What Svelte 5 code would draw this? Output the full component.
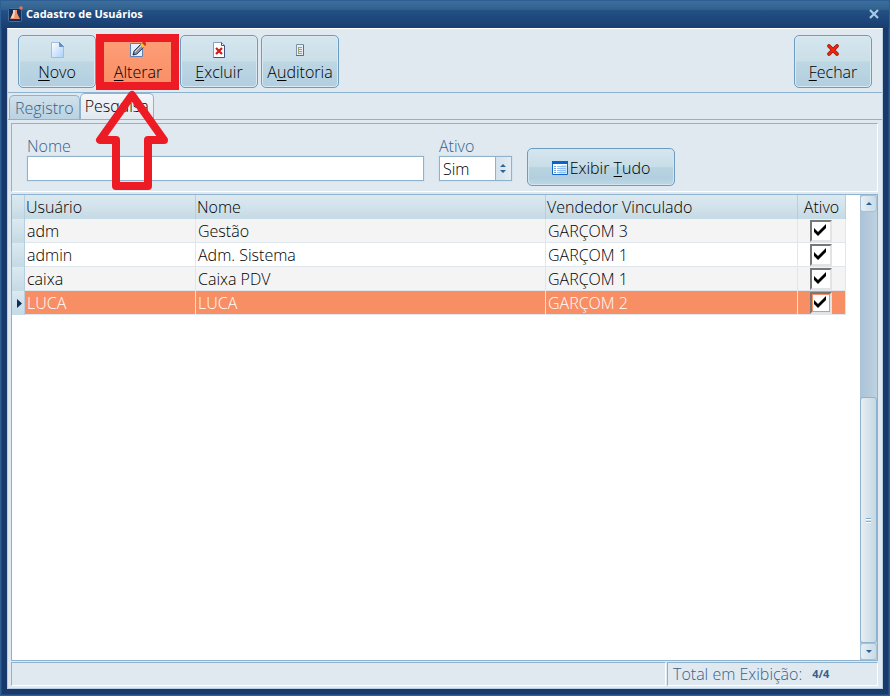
<script>
  let tab = $state("pesquisa");
  let nome = $state("");
  let ativo = $state("Sim");
  let selected = $state(3);

  let users = $state([
    { usuario: "adm", nome: "Gestão", vendedor: "GARÇOM 3", ativo: true },
    { usuario: "admin", nome: "Adm. Sistema", vendedor: "GARÇOM 1", ativo: true },
    { usuario: "caixa", nome: "Caixa PDV", vendedor: "GARÇOM 1", ativo: true },
    { usuario: "LUCA", nome: "LUCA", vendedor: "GARÇOM 2", ativo: true },
  ]);

  let total = $derived(users.length);
</script>

<div class="window">
  <header class="titlebar">
    <svg class="app-icon" width="16" height="16" viewBox="0 0 16 16">
      <rect x="1.500" y="2.500" width="13" height="13" rx="1" fill="#14305a" stroke="#3f6f9c" />
      <path d="M6 4h4v3l3 6H3l3-6z" fill="#f08f68" />
      <path d="M6 4h2v3l-1 5H4l2-5z" fill="#fbd0b8" />
      <circle cx="14" cy="2" r="1.800" fill="#e8764a" />
    </svg>
    <h1>Cadastro de Usuários</h1>
    <button class="close" aria-label="Fechar janela">
      <svg width="12" height="12" viewBox="0 0 12 12">
        <path d="M2 2l8 8M10 2l-8 8" stroke="#a9cbe6" stroke-width="2.200" />
      </svg>
    </button>
  </header>

  <main class="client">
    <div class="toolbar">
      <button class="tool">
        <svg width="16" height="16" viewBox="0 0 16 16">
          <defs>
            <linearGradient id="sheet" x1="0" y1="0" x2="1" y2="1">
              <stop offset="0" stop-color="#fff" />
              <stop offset="1" stop-color="#a9d0fa" />
            </linearGradient>
          </defs>
          <path d="M2.500.5h8l4 4v11h-12z" fill="url(#sheet)" stroke="#a3bbe0" />
          <path d="M10.500.5v4h4z" fill="#5f8fcb" stroke="#6c8fc4" />
        </svg>
        <span><u>N</u>ovo</span>
      </button>
      <button class="tool hot">
        <svg width="18" height="16" viewBox="0 0 18 16">
          <path d="M1.500 1.500h12v13h-12z" fill="#e4f0ff" stroke="#5d82b8" />
          <path d="M4 13l1-4 7-7 3 3-7 7z" fill="#8790a8" stroke="#393f58" />
          <path d="M6 10l7-7" stroke="#d8dce8" />
          <path d="M11 3l2-2 3 3-2 2z" fill="#f4c33f" />
          <path d="M13 1l1-1h2l1 1v2l-1 1z" fill="#dc2b20" />
          <path d="M4 13l.5-2 1.500 1.500z" fill="#222" />
        </svg>
        <span><u>A</u>lterar</span>
      </button>
      <button class="tool">
        <svg width="16" height="16" viewBox="0 0 16 16">
          <path d="M2.500.5h8l3 3v12h-11z" fill="#fff" stroke="#8b9bc0" />
          <path d="M10.500.5v3h3v12h-11" fill="none" stroke="#3f5480" />
          <path d="M5 6l6 6M11 6l-6 6" stroke="#cc1e14" stroke-width="2.200" />
        </svg>
        <span><u>E</u>xcluir</span>
      </button>
      <button class="tool">
        <svg width="16" height="16" viewBox="0 0 16 16">
          <path d="M4.500 2.500h7v11h-7z" fill="#e9edf0" stroke="#7796aa" />
          <path d="M11.500 3v10.500H4" fill="none" stroke="#59727f" />
          <path d="M6 5.500h4M6 7.500h4M6 9.500h4M6 11.500h4" stroke="#a49f78" />
          <path d="M6.500 5v7" stroke="#a49f78" />
        </svg>
        <span>A<u>u</u>ditoria</span>
      </button>
      <button class="tool last">
        <svg width="16" height="16" viewBox="0 0 16 16">
          <path d="M4 4l8 8M12 4l-8 8" stroke="#a51208" stroke-width="3.800" stroke-linecap="round" />
          <path d="M4 4l8 8M12 4l-8 8" stroke="#f02509" stroke-width="2.200" stroke-linecap="round" />
        </svg>
        <span><u>F</u>echar</span>
      </button>
      <div class="highlight"></div>
      <svg class="arrow" width="74" height="102" viewBox="0 0 74 102">
        <path
          d="M37 5L5 50h16v46h32V50h16z"
          fill="none"
          stroke="#ed1c24"
          stroke-width="8"
          stroke-linejoin="round"
        />
      </svg>
    </div>

    <div class="tabs" role="tablist">
      <button
        role="tab"
        class="tab"
        class:active={tab === "registro"}
        aria-selected={tab === "registro"}
        onclick={() => (tab = "registro")}>Registro</button
      >
      <button
        role="tab"
        class="tab"
        class:active={tab === "pesquisa"}
        aria-selected={tab === "pesquisa"}
        onclick={() => (tab = "pesquisa")}>Pesquisa</button
      >
    </div>

    <section class="page">
      <form class="filters" onsubmit={(e) => e.preventDefault()}>
        <div class="field name-field">
          <label for="nome">Nome</label>
          <input id="nome" type="text" bind:value={nome} />
        </div>
        <div class="field">
          <label for="ativo">Ativo</label>
          <select id="ativo" bind:value={ativo}>
            <option>Sim</option>
            <option>Não</option>
          </select>
        </div>
        <button class="show-all">
          <svg width="16" height="14" viewBox="0 0 16 14">
            <path d="M.5.5h15v13H.5z" fill="#fff" stroke="#1267ca" />
            <path d="M0 0h16v3H0z" fill="#0c62cc" />
            <path d="M9 4h6v9H7z" fill="#cfe6ff" />
            <path d="M2 5.500h2M2 7.500h2M2 9.500h2M2 11.500h2" stroke="#6ea5e3" />
            <path d="M5 5.500h9M5 7.500h9M5 9.500h9M5 11.500h9" stroke="#8fbff5" />
          </svg>
          <span>Exibir <u>T</u>udo</span>
        </button>
      </form>

      <div class="grid">
        <div class="rows">
          <table>
            <colgroup>
              <col class="c-mark" />
              <col class="c-user" />
              <col />
              <col class="c-seller" />
              <col class="c-active" />
            </colgroup>
            <thead>
              <tr>
                <th class="mark"></th>
                <th>Usuário</th>
                <th>Nome</th>
                <th>Vendedor Vinculado</th>
                <th class="center">Ativo</th>
              </tr>
            </thead>
            <tbody>
              {#each users as user, i}
                <tr class:selected={i === selected} onclick={() => (selected = i)}>
                  <td class="mark">
                    {#if i === selected}
                      <svg width="5" height="9" viewBox="0 0 5 9">
                        <path d="M0 0l5 4.500L0 9z" fill="#0d2b5c" />
                      </svg>
                    {/if}
                  </td>
                  <td>{user.usuario}</td>
                  <td>{user.nome}</td>
                  <td>{user.vendedor}</td>
                  <td class="check">
                    <input
                      type="checkbox"
                      aria-label="Ativo: {user.usuario}"
                      bind:checked={user.ativo}
                    />
                  </td>
                </tr>
              {/each}
            </tbody>
          </table>
        </div>
        <div class="scrollbar">
          <button class="step" aria-label="Rolar para cima">
            <svg width="6" height="3" viewBox="0 0 6 3"><path d="M0 3l3-3 3 3z" fill="#2c5f94" /></svg>
          </button>
          <div class="track">
            <div class="thumb"><i></i><i></i></div>
          </div>
          <button class="step" aria-label="Rolar para baixo">
            <svg width="6" height="3" viewBox="0 0 6 3"><path d="M0 0l3 3 3-3z" fill="#2c5f94" /></svg>
          </button>
        </div>
      </div>

      <footer class="status">
        <div class="cell grow"></div>
        <div class="cell total">
          <span>Total em Exibição:</span>
          <b>{total}/{total}</b>
        </div>
      </footer>
    </section>
  </main>
</div>

<style>
  :global(body) {
    background: #18396a;
  }

  .window,
  .window * {
    box-sizing: border-box;
  }

  .window {
    --line: #8fb3ce;
    --edge: #6c9dc1;
    --face: #e1e9f0;
    --ink: #35618c;
    display: flex;
    flex-direction: column;
    min-height: 100vh;
    padding: 0 6px 6px;
    background: #18396a;
    border: 1px solid #2d5f94;
    box-shadow: inset 0 0 0 1px #1f4a80;
    font-family: "Open Sans", "Noto Sans", sans-serif;
    font-size: 16px;
    font-weight: 300;
    line-height: 20px;
    color: #000;
  }

  button,
  input,
  select {
    font: inherit;
    color: inherit;
    margin: 0;
    padding: 0;
  }

  u {
    text-underline-offset: 2px;
    text-decoration-thickness: 1px;
  }

  .titlebar {
    display: flex;
    align-items: center;
    gap: 3px;
    height: 27px;
    margin: 0 -6px;
    padding: 0 9px 2px 6px;
    background: linear-gradient(#3c6d9c, #32638f 30%, #235084 36%, #193d70);
  }

  .titlebar h1 {
    flex: 1;
    margin: 0;
    font-size: 11px;
    font-weight: 700;
    color: #fff;
  }

  .close {
    display: flex;
    background: none;
    border: none;
  }

  .client {
    flex: 1;
    display: flex;
    flex-direction: column;
    background: var(--face);
    border: 1px solid #b7cfe2;
    border-top-color: #fff;
  }

  .toolbar {
    position: relative;
    display: flex;
    gap: 3px;
    padding: 6px 10px 4px;
    border-bottom: 1px solid var(--line);
  }

  .tool {
    display: flex;
    flex-direction: column;
    align-items: center;
    gap: 4px;
    width: 78px;
    height: 53px;
    padding-top: 6px;
    background: linear-gradient(#d5e6ee, #cbdfe9 48%, #bdd6e3 52%, #b2cfe0);
    border: 1px solid var(--edge);
    border-radius: 5px;
    box-shadow: inset 0 0 0 1px #d9e9f1;
  }

  .tool.hot {
    background: linear-gradient(#fd9f78, #f98e66);
  }

  .tool.last {
    margin-left: auto;
  }

  .highlight {
    position: absolute;
    z-index: 1;
    left: 88px;
    top: 5px;
    width: 83px;
    height: 56px;
    border: 8px solid #ed1c24;
    pointer-events: none;
  }

  .arrow {
    position: absolute;
    z-index: 2;
    left: 87px;
    top: 61px;
    pointer-events: none;
  }

  .tabs {
    display: flex;
    align-items: flex-end;
    height: 27px;
    padding-left: 1px;
    border-bottom: 1px solid var(--line);
  }

  .tab {
    height: 24px;
    padding: 0 5px;
    background: linear-gradient(#d0e1eb, #bad2e1);
    border: 1px solid var(--line);
    border-bottom: none;
    border-radius: 5px 5px 0 0;
    color: var(--ink);
  }

  .tab.active {
    height: 26px;
    padding: 0 4px 2px;
    background: linear-gradient(#f3f6f9, var(--face));
    color: #000;
  }

  .page {
    flex: 1;
    display: flex;
    flex-direction: column;
    padding: 3px 4px 0 3px;
  }

  .filters {
    display: flex;
    align-items: flex-end;
    gap: 15px;
    height: 69px;
    margin-bottom: 2px;
    padding: 0 14px 5px 15px;
    border: 1px solid var(--line);
    border-right-color: #fff;
    border-bottom-color: #fff;
  }

  .field {
    display: flex;
    flex-direction: column;
    padding-bottom: 5px;
  }

  .name-field {
    flex: 0 1 397px;
  }

  .field label {
    color: var(--ink);
  }

  .field input,
  .field select {
    height: 25px;
    padding: 0 3px;
    background-color: #fff;
    border: 1px solid var(--line);
    border-radius: 0;
    outline: 1px solid #d3e4ef;
  }

  .field input {
    width: 100%;
  }

  .field select {
    appearance: none;
    width: 73px;
    background-image:
      url("data:image/svg+xml,%3Csvg xmlns='http://www.w3.org/2000/svg' width='6' height='9'%3E%3Cpath d='M0 3l3-3 3 3zM0 6l3 3 3-3z' fill='%23306495'/%3E%3C/svg%3E"),
      linear-gradient(90deg, var(--line) 1px, #d4e2ec 1px, #e3ecf2);
    background-position:
      right 5px center,
      right center;
    background-size:
      6px 9px,
      16px 100%;
    background-repeat: no-repeat;
  }

  .show-all {
    display: flex;
    align-items: center;
    justify-content: center;
    gap: 2px;
    width: 148px;
    height: 38px;
    padding-top: 2px;
    background: linear-gradient(#d5e6ee, #c9dee8 48%, #b9d3e0 52%, #b2cfdf 80%, #bdd7e4);
    border: 1px solid var(--edge);
    border-radius: 5px;
    box-shadow: inset 0 0 0 1px #d3e5ee;
  }

  .grid {
    flex: 1;
    display: flex;
    background: #fff;
    border: 1px solid var(--line);
  }

  .rows {
    flex: 1;
    padding-right: 14px;
  }

  table {
    width: 100%;
    table-layout: fixed;
    border-collapse: separate;
    border-spacing: 0;
  }

  .c-mark {
    width: 13px;
  }

  .c-user {
    width: 171px;
  }

  .c-seller {
    width: 252px;
  }

  .c-active {
    width: 48px;
  }

  th,
  td {
    height: 24px;
    padding: 0 2px;
    text-align: left;
    font-weight: 300;
    white-space: nowrap;
    border-right: 1px solid #dfe7ee;
    border-bottom: 1px solid #dfe7ee;
  }

  th {
    padding: 0 1px;
    background: linear-gradient(#dce9f0, #d2e2eb 50%, #c4dae5);
    border-color: #b5cfdf;
    border-bottom: none;
  }

  .center {
    text-align: center;
  }

  tbody tr:nth-child(odd) {
    background: #f4f4f4;
  }

  tbody tr.selected {
    background: #f88e64;
    color: #fff;
  }

  td.mark {
    padding: 0 0 0 5px;
    line-height: 0;
    background: linear-gradient(#dce9f0, #c4dae5);
    border-right-color: #b5cfdf;
    border-bottom: none;
  }

  td.check {
    padding: 0 2px 0 0;
    text-align: center;
    line-height: 0;
  }

  td input {
    appearance: none;
    width: 22px;
    height: 22px;
    vertical-align: top;
    background-color: #fff;
    border: 2px solid #777;
    border-right-color: #e3e3e3;
    border-bottom-color: #e3e3e3;
  }

  td input:checked {
    background-image: url("data:image/svg+xml,%3Csvg xmlns='http://www.w3.org/2000/svg' width='12' height='12'%3E%3Cpath d='M0 4l4 4 8-8v4l-8 8-4-4z'/%3E%3C/svg%3E");
    background-repeat: no-repeat;
    background-position: 2px 2px;
  }

  .selected td input {
    box-shadow: inset 0 0 0 1px #f88e64;
  }

  .scrollbar {
    display: flex;
    flex-direction: column;
    width: 17px;
    background: linear-gradient(90deg, #abc3d7, #bdd2e1);
  }

  .step {
    display: flex;
    align-items: center;
    justify-content: center;
    height: 17px;
    background: linear-gradient(90deg, #e6eff5, #c8dbe7);
    border: 1px solid #a5c2d7;
    border-radius: 3px;
  }

  .track {
    flex: 1;
    display: flex;
    flex-direction: column;
    justify-content: flex-end;
  }

  .thumb {
    display: flex;
    flex-direction: column;
    align-items: center;
    justify-content: center;
    gap: 1px;
    height: 57%;
    background: linear-gradient(90deg, #e7eef4, #d3e1e9 60%, #c3d8e3);
    border: 1px solid var(--line);
    border-radius: 3px;
  }

  .thumb i {
    width: 5px;
    height: 2px;
    background: #fff;
    border-top: 1px solid #83aac8;
  }

  .status {
    display: flex;
    gap: 1px;
    height: 24px;
    margin-top: 1px;
    margin-bottom: 2px;
  }

  .cell {
    border: 1px solid var(--line);
    border-right-color: #fff;
    border-bottom-color: #fff;
  }

  .grow {
    flex: 1;
  }

  .total {
    display: flex;
    align-items: center;
    gap: 10px;
    width: 211px;
    padding-left: 5px;
    color: var(--ink);
  }

  .total b {
    font-size: 11px;
    font-weight: 700;
  }
</style>
